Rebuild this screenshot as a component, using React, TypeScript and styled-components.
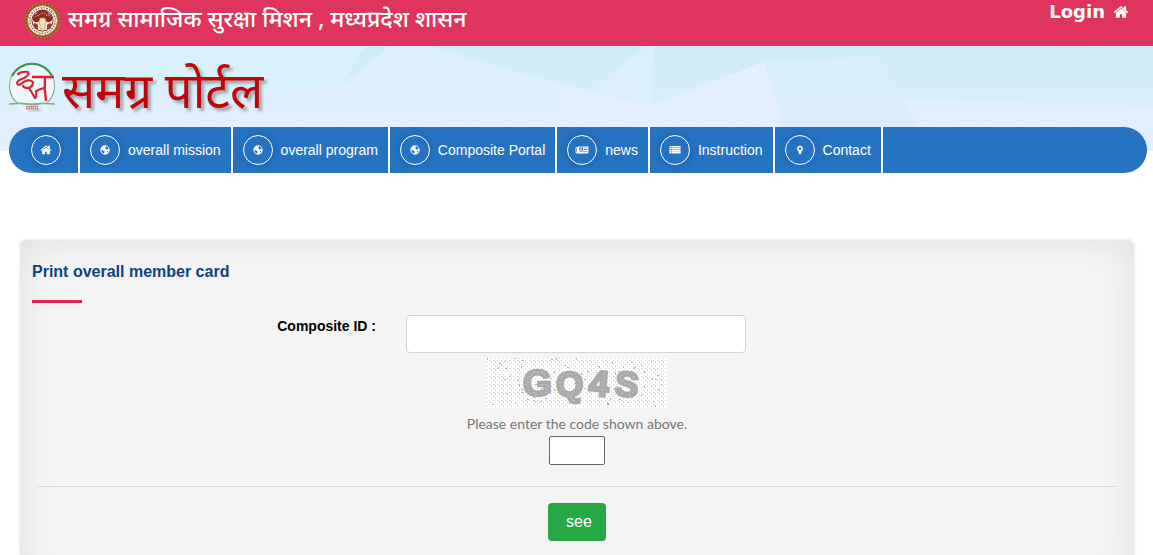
import React, { ReactNode } from "react";
import styled, { createGlobalStyle } from "styled-components";

const GlobalStyle = createGlobalStyle`
  *, *::before, *::after { box-sizing: border-box; }
  body {
    margin: 0;
    background: #fff;
    font-family: "Liberation Sans", Arial, sans-serif;
    font-size: 14px;
    color: #000;
    overflow-x: hidden;
  }
`;

const devanagari = `"Noto Sans Devanagari", "Lohit Devanagari", "Noto Sans", sans-serif`;

const TopBar = styled.header`
  display: flex;
  justify-content: space-between;
  align-items: flex-start;
  height: 46px;
  padding: 2px 24px 0 24px;
  background: #de345e;
  color: #fff;
`;

const Department = styled.div`
  display: flex;
  align-items: center;
  gap: 7px;
  font-family: ${devanagari};
  font-size: 23px;
  font-weight: 500;
  line-height: 36px;
  white-space: nowrap;
`;

const LoginLink = styled.a`
  display: flex;
  align-items: center;
  gap: 8px;
  color: #fff;
  font: bold 18px/20px "DejaVu Sans", Verdana, sans-serif;
  text-decoration: none;
`;

const Banner = styled.div`
  position: relative;
`;

const Backdrop = styled.svg`
  position: absolute;
  inset: 0 0 auto 0;
  width: 100%;
  height: 105px;
`;

const Brand = styled.a`
  position: relative;
  display: flex;
  align-items: flex-start;
  gap: 6px;
  height: 81px;
  padding: 16px 8px 0;
  color: #c00508;
  font-family: ${devanagari};
  font-size: 49px;
  line-height: 68px;
  text-decoration: none;
  text-shadow: 3px 3px 3px rgba(90, 90, 90, 0.5);
  white-space: nowrap;
`;

const Nav = styled.nav`
  position: relative;
  display: flex;
  height: 46px;
  margin: 0 6px 0 9px;
  border-radius: 24px;
  background: #2271c3;
  overflow: hidden;
`;

const Texture = styled.svg`
  position: absolute;
  inset: 0;
  width: 100%;
  height: 100%;
  opacity: 0.06;
`;

const NavItem = styled.a<{ $home?: boolean }>`
  position: relative;
  display: flex;
  align-items: center;
  gap: 8px;
  padding: ${(p) => (p.$home ? "0 17px 0 22px" : "0 10px")};
  border-right: 2px solid #fff;
  color: #fff;
  font-size: 14px;
  text-decoration: none;
  white-space: nowrap;
`;

const Ring = styled.span`
  display: flex;
  align-items: center;
  justify-content: center;
  width: 30px;
  height: 30px;
  border: 1px solid #fff;
  border-radius: 50%;
  box-shadow: 0 0 6px rgba(0, 30, 90, 0.25);
`;

const Panel = styled.main`
  margin: 68px 20px 0 21px;
  padding: 22px 16px 40px;
  border-radius: 4px;
  background: #f4f4f4;
  box-shadow: 0 0 4px rgba(0, 0, 0, 0.2), inset 0 0 36px rgba(0, 0, 0, 0.09);
`;

const Title = styled.h1`
  margin: 0 -5px;
  color: #0f437b;
  font-size: 16px;
  line-height: 18px;

  &::after {
    content: "";
    display: block;
    width: 50px;
    height: 3px;
    margin: 19px 0 12px;
    background: #dc2454;
  }
`;

const Field = styled.div`
  display: grid;
  grid-template-columns: 1fr 340px 1fr;
  column-gap: 30px;
  margin: 0 2px 5px 0;
`;

const FieldLabel = styled.label`
  padding-top: 3px;
  font-weight: bold;
  line-height: 16px;
  text-align: right;
`;

const TextInput = styled.input`
  width: 100%;
  height: 38px;
  padding: 6px 12px;
  border: 1px solid #ced4da;
  border-radius: 4px;
  background: #fff;
  font-size: 16px;
`;

const Verification = styled.div`
  display: flex;
  flex-direction: column;
  align-items: center;
`;

const CodeLabel = styled.label`
  margin: 5px 0 1px;
  color: #777;
  font: 14px/22px Lato, "Trebuchet MS", sans-serif;
`;

const CodeInput = styled.input`
  width: 56px;
  height: 29px;
  border: 1px solid #666;
  border-radius: 2px;
  background: #fff;
  font-size: 14px;
`;

const Divider = styled.hr`
  height: 1px;
  margin: 21px 0 16px;
  border: 0;
  background: #dadada;
`;

const SubmitButton = styled.button`
  display: block;
  height: 38px;
  margin: 0 auto;
  padding: 0 14px 0 18px;
  border: 0;
  border-radius: 4px;
  background: #28a745;
  color: #fff;
  font: 16px/24px "Liberation Sans", Arial, sans-serif;
`;

const Glyph = ({ size = 12, children }: { size?: number; children: ReactNode }) => (
  <svg width={size} height={size} viewBox="0 0 1792 1792" fill="currentColor" overflow="visible" aria-hidden="true">
    {children}
  </svg>
);

const homePath = (
  <path d="M1472 992v480q0 26-19 45t-45 19h-384v-384h-256v384h-384q-26 0-45-19t-19-45v-480q0-1 .5-3t.5-3l575-474 575 474q1 2 1 6zm223-69l-62 74q-8 9-21 11h-3q-13 0-21-7l-692-577-692 577q-12 8-24 7-13-2-21-11l-62-74q-8-10-7-23.5t11-21.5l719-599q32-26 76-26t76 26l244 204v-195q0-14 9-23t23-9h192q14 0 23 9t9 23v408l219 182q10 8 11 21.5t-7 23.5z" />
);

const globePath = (
  <path
    fillRule="evenodd"
    d="M896 200a700 700 0 1 0 0 1400a700 700 0 1 0 0-1400zM1010 330l210 50 200 220-30 190-120-60-70 120-140-60-110-100 100-110-110-90zM340 980l60-80 230 80 220 170-60 160-140 110-190-140zM1200 1040l180-50-60 190-140 100z"
  />
);

const newsPath = (
  <path
    fillRule="evenodd"
    d="M256 380H1860V1320q0 80-90 80H60Q-60 1400-60 1300V500H256zM60 600V1260H160V600zM500 540H1080V960H500zM650 660V840H930V660zM1200 560H1700V640H1200zM1200 800H1700V880H1200zM500 1120H1700V1210H500z"
  />
);

const listPath = (
  <path d="M60 300H320V540H60zM60 590H320V830H60zM60 880H320V1120H60zM60 1170H320V1410H60zM380 300H1732V540H380zM380 590H1732V830H380zM380 880H1732V1120H380zM380 1170H1732V1410H380z" />
);

const pinPath = (
  <path d="M1152 640q0-106-75-181t-181-75-181 75-75 181 75 181 181 75 181-75 75-181zm256 0q0 109-33 179l-364 774q-16 33-47.5 52t-67.5 19-67.5-19-46.5-52l-365-774q-33-70-33-179 0-212 150-362t362-150 362 150 150 362z" />
);

const navLinks: { label: string; icon: ReactNode; size?: number }[] = [
  { label: "overall mission", icon: globePath },
  { label: "overall program", icon: globePath },
  { label: "Composite Portal", icon: globePath },
  { label: "news", icon: newsPath },
  { label: "Instruction", icon: listPath },
  { label: "Contact", icon: pinPath, size: 10 },
];

const StateEmblem = () => (
  <svg width="37" height="37" viewBox="0 0 37 37" role="img" aria-label="Government of Madhya Pradesh">
    <circle cx="18.500" cy="18.500" r="17" fill="#8a5226" stroke="#a9752f" strokeWidth="2" strokeDasharray="2 1.400" />
    <circle cx="18.500" cy="18.500" r="15" fill="#fff8ee" stroke="#b98436" />
    <circle cx="18.500" cy="18.500" r="12.700" fill="none" stroke="#8b7565" strokeWidth="1.500" strokeDasharray="1.300 1.200 2 1" />
    <circle cx="18.500" cy="18.500" r="10.600" fill="#fbeee2" stroke="#8c2b20" />
    <path d="M9 18q-1-5 3-6 2-4 6.500-4t6.500 4q4 1 3 6-2 3-5 2l-2-2h-5l-2 2q-4 1-5-2z" fill="#8c2b20" />
    <path d="M11 15q2-2 4-1 1-3 4-3t4 3q3-1 4 1" fill="none" stroke="#ecc1a4" strokeDasharray="1.500 1.200" />
    <path d="M16 16h5l1 4-1 3v4h-5v-4l-1-3z" fill="#f5dfb4" stroke="#b9864b" strokeWidth="0.600" />
    <path d="M9 22q3-2 5 1v4h-3zM28 22q-3-2-5 1v4h3z" fill="#97402b" />
  </svg>
);

const PortalLogo = () => (
  <svg width="48" height="50" viewBox="0 0 48 50" aria-hidden="true">
    <circle cx="24" cy="24" r="22.500" fill="#eef7fa" stroke="#83b58c" strokeWidth="1.200" />
    <path d="M4 14A22.500 22.500 0 0 1 44 14" fill="none" stroke="#3d934a" strokeWidth="2" />
    <rect x="9" y="42" width="30" height="8" fill="#e6f3fa" />
    <path d="M1 42q11-2 23 0 12-2 23 0-12-1-23 1-12-2-23-1z" fill="#7eaf80" stroke="#7eaf80" />
    <path d="M24 15H46M37 15q-1 12 1 24" fill="none" stroke="#d52335" strokeWidth="2.400" />
    <path
      d="M10 12q4-3 10-2 2 3-4 6-6 2-7 5 1 3 4 1 7-6 12-2 0 5-5 6-4 0-5-2M21 26q2 3 6 10M37 26q-6 1-8 3M27 36q2-1 1-7"
      fill="none" stroke="#d52335" strokeWidth="2.200" strokeLinecap="round" strokeLinejoin="round"
    />
    <text x="24" y="48" textAnchor="middle" fontFamily="Noto Sans Devanagari, sans-serif" fontSize="7" fill="#c34b76">समग्र</text>
  </svg>
);

const specks = Array.from({ length: 90 }, (_, i) => ({
  x: (i * 67 + (i * i * 13) % 41) % 178,
  y: (i * 29 + (i * i * 7) % 31) % 48,
  w: 1 + (i % 2),
}));

const Captcha = () => (
  <svg width="180" height="50" viewBox="0 0 180 50" role="img" aria-label="Verification code">
    <defs>
      <pattern id="dots" width="4" height="4" patternUnits="userSpaceOnUse">
        <rect width="4" height="4" fill="#fff" />
        <path d="M0 0h1v1H0zM2 2h1v1H2z" fill="#d2d2d2" />
      </pattern>
      <pattern id="confetti" width="4" height="4" patternUnits="userSpaceOnUse">
        <rect width="4" height="4" fill="#a8a8a8" />
        <path d="M0 0h2v1H0zM2 2h2v1H2z" fill="#cecece" />
      </pattern>
    </defs>
    <rect width="180" height="50" fill="url(#dots)" />
    {specks.map((s, i) => (
      <rect key={i} x={s.x} y={s.y} width={s.w} height={3 - s.w} fill="#b5b5b5" />
    ))}
    <g fill="url(#confetti)" stroke="#aaa" strokeWidth="2.500" fontFamily="Liberation Sans, Arial, sans-serif" fontWeight="bold">
      <text x="36" y="38" fontSize="37">G</text>
      <text x="69" y="38" fontSize="35">Q</text>
      <text x="101" y="37" fontSize="36" transform="rotate(5 101 37)">4</text>
      <text x="127" y="37" fontSize="35" transform="rotate(6 127 37)">S</text>
    </g>
  </svg>
);

export default function App() {
  return (
    <>
      <GlobalStyle />
      <TopBar>
        <Department>
          <StateEmblem />
          <span>समग्र सामाजिक सुरक्षा मिशन , मध्यप्रदेश शासन</span>
        </Department>
        <LoginLink href="#login">
          Login <Glyph size={16}>{homePath}</Glyph>
        </LoginLink>
      </TopBar>
      <Banner>
        <Backdrop viewBox="0 0 1153 105" preserveAspectRatio="none" aria-hidden="true">
          <defs>
            <linearGradient id="sky" x2="0" y2="1">
              <stop stopColor="#cdedf8" />
              <stop offset="1" stopColor="#e0edfe" />
            </linearGradient>
            <linearGradient id="haze" x2="0" y2="1">
              <stop stopColor="#daeefb" />
              <stop offset="1" stopColor="#e4effe" />
            </linearGradient>
          </defs>
          <rect width="1153" height="105" fill="url(#sky)" />
          <path d="M0 0H365L342 38 280 46 0 60z" fill="#d8f1fb" />
          <path d="M0 52L280 46 342 40 390 0 430 0 560 38 650 60 764 16 785 50 1153 60V105H0z" fill="url(#haze)" />
          <path d="M560 38L650 60 764 16 790 105H560z" fill="#e6f0fe" opacity="0.7" />
          <path d="M592 44L645 0H655L650 58z" fill="#e2f2fc" opacity="0.5" />
          <path d="M764 16L880 10 930 105H790z" fill="#d9edfb" opacity="0.7" />
        </Backdrop>
        <Brand href="#home">
          <PortalLogo />
          <span>समग्र पोर्टल</span>
        </Brand>
        <Nav aria-label="Main">
          <Texture aria-hidden="true">
            <filter id="grain">
              <feTurbulence type="fractalNoise" baseFrequency="0.5" numOctaves="2" />
              <feColorMatrix type="saturate" values="0" />
            </filter>
            <rect width="100%" height="100%" filter="url(#grain)" />
          </Texture>
          <NavItem href="#home" $home aria-label="Home">
            <Ring><Glyph>{homePath}</Glyph></Ring>
          </NavItem>
          {navLinks.map((link) => (
            <NavItem key={link.label} href="#">
              <Ring><Glyph size={link.size}>{link.icon}</Glyph></Ring>
              {link.label}
            </NavItem>
          ))}
        </Nav>
      </Banner>
      <Panel>
        <form onSubmit={(e) => e.preventDefault()}>
          <Title>Print overall member card</Title>
          <Field>
            <FieldLabel htmlFor="composite-id">Composite ID :</FieldLabel>
            <TextInput id="composite-id" type="text" />
          </Field>
          <Verification>
            <Captcha />
            <CodeLabel htmlFor="code">Please enter the code shown above.</CodeLabel>
            <CodeInput id="code" type="text" />
          </Verification>
          <Divider />
          <SubmitButton type="submit">see</SubmitButton>
        </form>
      </Panel>
    </>
  );
}
